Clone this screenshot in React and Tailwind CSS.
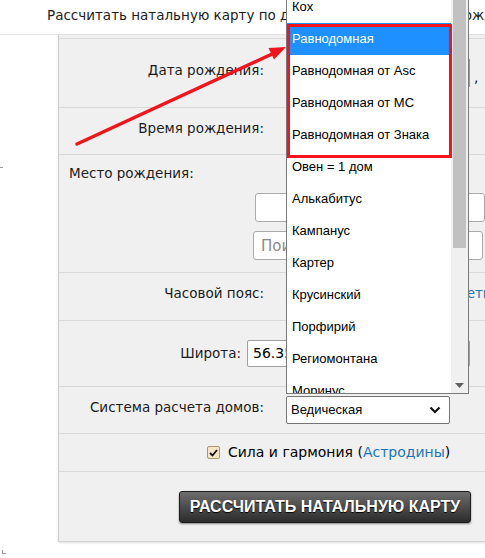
const houseSystems = [
  'Кох',
  'Равнодомная',
  'Равнодомная от Asc',
  'Равнодомная от MC',
  'Равнодомная от Знака',
  'Овен = 1 дом',
  'Алькабитус',
  'Кампанус',
  'Картер',
  'Крусинский',
  'Порфирий',
  'Региомонтана',
  'Моринус',
];

const Label = ({ children }) => (
  <div className="w-[227px] shrink-0 pr-[22px] pb-[6px] text-right">{children}</div>
);

const Chevron = () => (
  <svg width="12" height="8" viewBox="0 0 12 8">
    <path d="M1.5 1.5 L6 6 L10.5 1.5" fill="none" stroke="#111" strokeWidth="2.2" />
  </svg>
);

const HouseList = () => (
  <div className="absolute left-[286px] top-0 w-[183px] h-[394px] bg-white border border-t-0 border-[#7a7a7a] flex overflow-hidden font-['Liberation_Sans',Arial,sans-serif] text-[13px] text-black">
    <div className="flex-1 overflow-hidden">
      <div className="-mt-[9px]">
        {houseSystems.map(name => (
          <div
            key={name}
            className={
              name === 'Равнодомная'
                ? 'h-[32px] flex items-center pl-[5px] bg-[#1e90ff] text-white'
                : 'h-[32px] flex items-center pl-[5px]'
            }
          >
            {name}
          </div>
        ))}
      </div>
    </div>
    <div className="w-[17px] shrink-0 bg-[#f0f0f0] flex flex-col justify-between">
      <div className="ml-[2px] w-[13px] h-[248px] bg-[#c1c1c1]" />
      <div className="h-[16px] flex items-center justify-center">
        <svg width="9" height="5" viewBox="0 0 9 5">
          <path d="M0 0 H9 L4.5 5 Z" fill="#606060" />
        </svg>
      </div>
    </div>
  </div>
);

const App = () => {
  return (
    <div className="relative w-[485px] h-[558px] overflow-hidden bg-white font-['DejaVu_Sans',Verdana,sans-serif] text-[13.5px] text-[#1c1c1c]">
      <div className="h-[35px] border-b border-[#e3e3e3] pl-[47px] pb-[3px] flex items-center whitespace-nowrap overflow-hidden">
        Рассчитать натальную карту по дате рождения и время рождения
      </div>

      <div className="flex">
        <div className="w-[58px] shrink-0">
          <div className="mt-[132px] w-[3px] h-px bg-[#9a9a9a]" />
        </div>

        <div className="w-[460px] shrink-0 bg-[#f0f0f0] border-l border-[#cdcdcd] border-b border-b-[#d4d4d4] pt-[3px] shadow-[0_1px_2px_rgba(0,0,0,0.12)]">
          <div className="h-[69px] flex items-center border-t border-[#d9d9d9]">
            <Label>Дата рождения:</Label>
            <div className="w-[184px] h-[28px] shrink-0 bg-white border border-[#999]" />
            <span className="ml-[4px] mt-[8px]">,</span>
          </div>

          <div className="h-[47px] flex items-center border-t border-[#d9d9d9]">
            <Label>Время рождения:</Label>
            <div className="w-[120px] h-[28px] shrink-0 bg-white border border-[#999]" />
          </div>

          <div className="h-[118px] border-t border-[#d9d9d9] pl-[10px] pt-[8px]">
            <div>Место рождения:</div>
            <div className="ml-[186px] mt-[10px] w-[230px] h-[29px] bg-white border border-[#aaa] rounded-[3px]" />
            <div className="ml-[184px] mt-[9px] w-[230px] h-[29px] bg-white border border-[#aaa] rounded-[3px] flex items-center pl-[7px] text-[15px] text-[#8a8a8a]">
              Поиск...
            </div>
          </div>

          <div className="h-[48px] flex items-center border-t border-[#d9d9d9]">
            <Label>Часовой пояс:</Label>
            <div className="w-[172px] h-[28px] shrink-0 bg-white border border-[#999]" />
            <span className="pb-[6px] text-[#1b75bb] whitespace-nowrap">летнее время</span>
          </div>

          <div className="h-[66px] flex items-center border-t border-[#d9d9d9]">
            <div className="w-[182px] shrink-0 text-right">Широта:</div>
            <div className="ml-[6px] w-[223px] h-[27px] shrink-0 bg-white border border-[#a0a0a0] rounded-[2px] flex items-center pl-[5px] text-[14px] text-black">
              56.35
            </div>
          </div>

          <div className="h-[47px] flex items-center border-t border-[#d9d9d9]">
            <Label>Система расчета домов:</Label>
            <div className="w-[164px] h-[28px] shrink-0 bg-white border border-[#767676] rounded-[2px] flex items-center justify-between pl-[4px] pr-[8px] font-['Liberation_Sans',Arial,sans-serif] text-[13px] text-black">
              <span>Ведическая</span>
              <Chevron />
            </div>
          </div>

          <div className="h-[38px] flex items-center border-t border-[#d9d9d9] pl-[148px]">
            <span className="w-[13px] h-[13px] border border-[#a89870] bg-[#f4e6c4] rounded-[2px] flex items-center justify-center">
              <svg width="9" height="8" viewBox="0 0 9 8">
                <path d="M1 4 L3.5 6.5 L8 1" fill="none" stroke="#111" strokeWidth="1.8" />
              </svg>
            </span>
            <span className="ml-[8px] text-[14px] text-black">
              Сила и гармония (<span className="text-[#1b75bb]">Астродины</span>)
            </span>
          </div>

          <div className="h-[70px] border-t border-[#d9d9d9] pl-[120px] pt-[19px]">
            <button className="w-[292px] h-[32px] rounded-[3px] border border-[#1c1c1c] bg-linear-to-b from-[#6e6e6e] to-[#2c2c2c] shadow-[0_1px_2px_rgba(0,0,0,0.45)] font-['Liberation_Sans',Arial,sans-serif] font-bold text-[16px] text-white [text-shadow:0_1px_1px_#000]">
              РАССЧИТАТЬ НАТАЛЬНУЮ КАРТУ
            </button>
          </div>
        </div>
      </div>

      <div className="ml-[2px] mt-[8px] w-[4px] h-[4px] border-l border-b border-[#9a9a9a]" />

      <HouseList />

      <div className="absolute left-[287px] top-[24px] w-[165px] h-[134px] border-[3px] border-[#f5141b] pointer-events-none" />

      <svg className="absolute inset-0 pointer-events-none" width="485" height="558">
        <line x1="77" y1="144" x2="272" y2="54" stroke="#f2141b" strokeWidth="3.5" strokeLinecap="round" />
        <polygon points="286,47 274,59.5 268.5,48" fill="#f2141b" />
      </svg>
    </div>
  );
};

export default App;
